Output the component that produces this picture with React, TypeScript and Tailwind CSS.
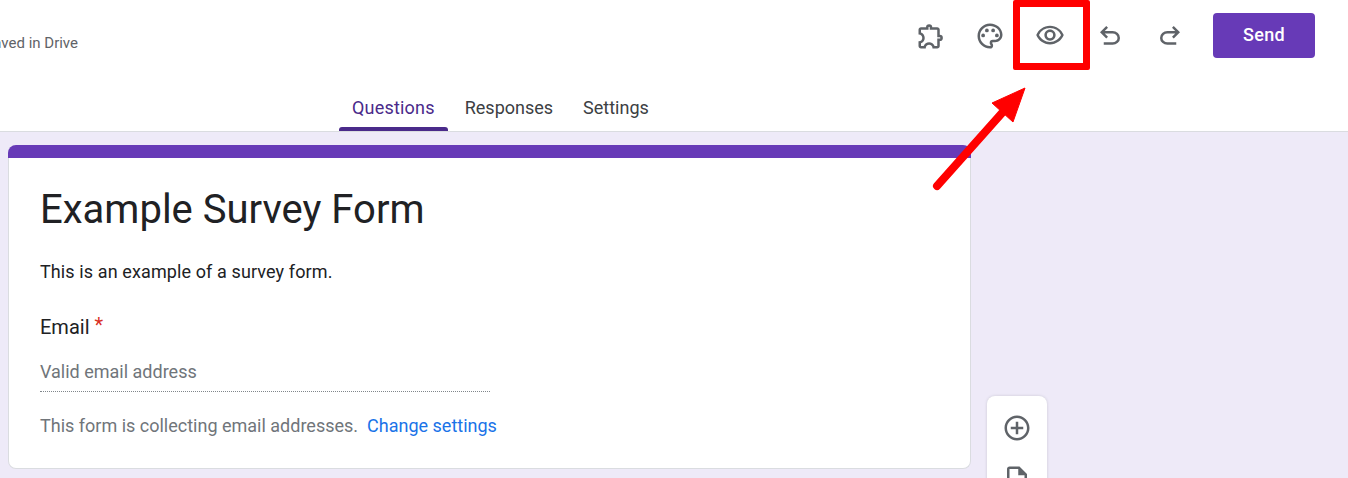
import { MdOutlineExtension, MdOutlinePalette, MdOutlineRemoveRedEye, MdAddCircleOutline, MdOutlineInsertDriveFile } from "react-icons/md";

const roboto = "font-['Roboto',sans-serif]";

function UndoIcon() {
  return (
    <svg className="h-[30px] w-[30px]" viewBox="0 -960 960 960" fill="currentColor">
      <path d="M280-200v-80h284q63 0 109.5-40T720-420q0-60-46.5-100T564-560H312l104 104-56 56-200-200 200-200 56 56-104 104h252q97 0 166.5 63T800-420q0 94-69.5 157T564-200H280Z" />
    </svg>
  );
}

function RedoIcon() {
  return (
    <svg className="h-[30px] w-[30px]" viewBox="0 -960 960 960" fill="currentColor">
      <path d="M396-200q-97 0-166.5-63T160-420q0-94 69.5-157T396-640h252L544-744l56-56 200 200-200 200-56-56 104-104H396q-63 0-109.5 40T240-420q0 60 46.5 100T396-280h284v80H396Z" />
    </svg>
  );
}

export default function App() {
  return (
    <div className={`relative h-[478px] w-[1348px] overflow-hidden bg-[#eeeaf8] ${roboto}`}>
      <header className="h-[132px] border-b border-[#dadce0] bg-white">
        <div className="flex h-[84px] pr-[33px]">
          <div className="mt-[34px] flex h-[18px] w-[78px] justify-end overflow-hidden whitespace-nowrap text-[15px] leading-[18px] text-[#5f6368]">
            All changes saved in Drive
          </div>
          <div className="ml-auto flex h-[58px] items-center pt-[13px] text-[#5f6368]">
            <div className="flex w-[297px] items-center justify-between pr-[28px]">
              <MdOutlineExtension className="h-[30px] w-[30px]" />
              <MdOutlinePalette className="-ml-px h-[30px] w-[30px]" />
              <MdOutlineRemoveRedEye className="-ml-px -mt-[2px] h-[30px] w-[30px]" />
              <UndoIcon />
              <RedoIcon />
            </div>
            <button className="-mt-[1px] h-[45px] w-[102px] rounded-[4px] bg-[#673ab7] pb-[1px] text-[18px] font-medium tracking-[0.3px] text-white">Send</button>
          </div>
        </div>
        <nav className="ml-[339px] flex h-[47px] text-[18px] text-[#3c4043]">
          <a className="relative flex items-center px-[13px] tracking-[0.2px] text-[#4a2a8a]">
            Questions
            <span className="absolute bottom-0 left-0 right-0 h-[4px] rounded-t-[3px] bg-[#4a2a8a]"></span>
          </a>
          <a className="ml-[4px] flex items-center px-[13px]">Responses</a>
          <a className="ml-[4px] flex items-center px-[13px]">Settings</a>
        </nav>
      </header>

      <main className="flex pl-[8px] pt-[13px]">
        <section className="w-[963px] overflow-hidden rounded-[8px]">
          <div className="h-[13px] bg-[#673ab7]"></div>
          <div className="h-[311px] rounded-b-[8px] border-x border-b border-[#dadce0] bg-white pl-[31px] pt-[28px]">
            <h1 className="text-[40px] leading-[48px] text-[#202124]">Example Survey Form</h1>
            <p className="mt-[26px] text-[18px] leading-[24px] tracking-[0.11px] text-[#202124]">This is an example of a survey form.</p>
            <div className="mt-[31px] flex text-[20px] leading-[24px] text-[#202124]">
              Email<span className="ml-[5px] -mt-[2px] text-[#d93025]">*</span>
            </div>
            <div className="mt-[21px] w-[450px] border-b border-dotted border-[#80868b] pb-[7px] text-[18px] leading-[24px] text-[#70757a]">Valid email address</div>
            <p className="mt-[22px] text-[18px] leading-[24px] text-[#70757a]">
              This form is collecting email addresses.<a className="ml-[9px] text-[#1a73e8]">Change settings</a>
            </p>
          </div>
        </section>

        <aside className="ml-[16px] mt-[251px] flex h-[200px] w-[60px] flex-col items-center rounded-[8px] bg-white pt-[17px] text-[#5f6368] shadow-[0_0_3px_rgba(60,64,67,0.2)]">
          <MdAddCircleOutline className="h-[30px] w-[30px]" />
          <MdOutlineInsertDriveFile className="mt-[21px] h-[30px] w-[30px]" />
        </aside>
      </main>

      <div className="absolute left-[1013px] top-0 h-[70px] w-[77px] rounded-[2px] border-[7px] border-[#ff0000]"></div>
      <svg className="absolute left-[920px] top-[80px]" width="120" height="120" viewBox="0 0 120 120">
        <path d="M17 106 L82 33" stroke="#ff0000" strokeWidth="8" strokeLinecap="round" fill="none" />
        <polygon points="105,8 93,42 72,23" fill="#ff0000" stroke="#ff0000" strokeWidth="1" />
      </svg>
    </div>
  );
}
